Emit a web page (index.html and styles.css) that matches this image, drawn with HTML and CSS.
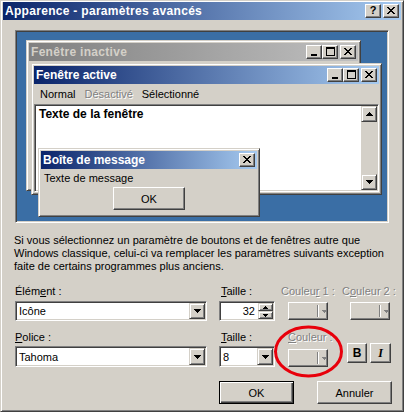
FILE: index.html
```html
<!DOCTYPE html>
<html lang="fr">
<head>
<meta charset="utf-8">
<title>Apparence - paramètres avancés</title>
<link rel="stylesheet" href="styles.css">
</head>
<body>
<div class="win">
  <div class="titlebar">
    <span class="ttext">Apparence - paramètres avancés</span>
    <div class="capbtns">
      <span class="capbtn qmark">?</span>
      <span class="capbtn gap"><svg width="8" height="7" viewBox="0 0 8 7" shape-rendering="crispEdges"><path d="M0 0h2v1H0zM6 0h2v1H6zM1 1h2v1H1zM5 1h2v1H5zM2 2h4v1H2zM3 3h2v1H3zM2 4h4v1H2zM1 5h2v1H1zM5 5h2v1H5zM0 6h2v1H0zM6 6h2v1H6z" fill="#000"/></svg></span>
    </div>
  </div>

  <div class="content">
    <div class="preview">
      <div class="pwin inactive">
        <div class="cap cap-inactive">
          <span class="captext">Fenêtre inactive</span>
          <div class="capbtns">
            <span class="capbtn"><svg width="6" height="2" viewBox="0 0 6 2" class="minglyph"><rect width="6" height="2" fill="#000"/></svg></span>
            <span class="capbtn"><svg width="9" height="9" viewBox="0 0 9 9" shape-rendering="crispEdges"><path d="M0 0h9v2H0zM0 2h1v7H0zM8 2h1v7H8zM1 8h7v1H1z" fill="#000"/></svg></span>
            <span class="capbtn gap"><svg width="8" height="7" viewBox="0 0 8 7" shape-rendering="crispEdges"><path d="M0 0h2v1H0zM6 0h2v1H6zM1 1h2v1H1zM5 1h2v1H5zM2 2h4v1H2zM3 3h2v1H3zM2 4h4v1H2zM1 5h2v1H1zM5 5h2v1H5zM0 6h2v1H0zM6 6h2v1H6z" fill="#000"/></svg></span>
          </div>
        </div>
      </div>

      <div class="pwin active">
        <div class="cap cap-active">
          <span class="captext">Fenêtre active</span>
          <div class="capbtns">
            <span class="capbtn"><svg width="6" height="2" viewBox="0 0 6 2" class="minglyph"><rect width="6" height="2" fill="#000"/></svg></span>
            <span class="capbtn"><svg width="9" height="9" viewBox="0 0 9 9" shape-rendering="crispEdges"><path d="M0 0h9v2H0zM0 2h1v7H0zM8 2h1v7H8zM1 8h7v1H1z" fill="#000"/></svg></span>
            <span class="capbtn gap"><svg width="8" height="7" viewBox="0 0 8 7" shape-rendering="crispEdges"><path d="M0 0h2v1H0zM6 0h2v1H6zM1 1h2v1H1zM5 1h2v1H5zM2 2h4v1H2zM3 3h2v1H3zM2 4h4v1H2zM1 5h2v1H1zM5 5h2v1H5zM0 6h2v1H0zM6 6h2v1H6z" fill="#000"/></svg></span>
          </div>
        </div>
        <div class="menubar">
          <span class="mitem">Normal</span>
          <span class="mitem disabled">Désactivé</span>
          <span class="mitem">Sélectionné</span>
        </div>
        <div class="textarea">
          <div class="tcontent">Texte de la fenêtre</div>
          <div class="scrollbar">
            <span class="sbtn"><svg width="7" height="4" viewBox="0 0 7 4" shape-rendering="crispEdges"><path d="M3 0h1v1H3zM2 1h3v1H2zM1 2h5v1H1zM0 3h7v1H0z" fill="#000"/></svg></span>
            <span class="strack"></span>
            <span class="sbtn"><svg width="7" height="4" viewBox="0 0 7 4" shape-rendering="crispEdges"><path d="M0 0h7v1H0zM1 1h5v1H1zM2 2h3v1H2zM3 3h1v1H3z" fill="#000"/></svg></span>
          </div>
        </div>
      </div>

      <div class="pwin msg">
        <div class="cap cap-active">
          <span class="captext">Boîte de message</span>
          <div class="capbtns">
            <span class="capbtn"><svg width="8" height="7" viewBox="0 0 8 7" shape-rendering="crispEdges"><path d="M0 0h2v1H0zM6 0h2v1H6zM1 1h2v1H1zM5 1h2v1H5zM2 2h4v1H2zM3 3h2v1H3zM2 4h4v1H2zM1 5h2v1H1zM5 5h2v1H5zM0 6h2v1H0zM6 6h2v1H6z" fill="#000"/></svg></span>
          </div>
        </div>
        <div class="msgtext">Texte de message</div>
        <div class="msgbtnrow"><span class="pbtn msgok">OK</span></div>
      </div>
    </div>

    <p class="desc">Si vous sélectionnez un paramètre de boutons et de fenêtres autre que<br>Windows classique, celui-ci va remplacer les paramètres suivants exception<br>faite de certains programmes plus anciens.</p>

    <div class="frow frow1">
      <div class="field f-elem">
        <span class="lbl">Élém<u>e</u>nt :</span>
        <div class="combo h20">
          <span class="cval">Icône</span>
          <span class="dropbtn"><svg width="7" height="4" viewBox="0 0 7 4" shape-rendering="crispEdges"><path d="M0 0h7v1H0zM1 1h5v1H1zM2 2h3v1H2zM3 3h1v1H3z" fill="#000"/></svg></span>
        </div>
      </div>
      <div class="field f-size">
        <span class="lbl lbl-ind"><u>T</u>aille :</span>
        <div class="spin">
          <span class="sval">32</span>
          <span class="spinbtns">
            <span class="spbtn"><svg width="5" height="3" viewBox="0 0 5 3" shape-rendering="crispEdges"><path d="M2 0h1v1H2zM1 1h3v1H1zM0 2h5v1H0z" fill="#000"/></svg></span>
            <span class="spbtn"><svg width="5" height="3" viewBox="0 0 5 3" shape-rendering="crispEdges"><path d="M0 0h5v1H0zM1 1h3v1H1zM2 2h1v1H2z" fill="#000"/></svg></span>
          </span>
        </div>
      </div>
      <div class="field f-col1">
        <span class="lbl disabled">Couleu<u>r</u> 1 :</span>
        <span class="colbtn ind7">
          <span class="colsep"></span>
          <svg class="colarrow" width="5" height="3" viewBox="0 0 5 3" shape-rendering="crispEdges"><path d="M0 0h5v1H0zM1 1h3v1H1zM2 2h1v1H2z" fill="#808080"/></svg>
        </span>
      </div>
      <div class="field f-col2">
        <span class="lbl disabled">C<u>o</u>uleur 2 :</span>
        <span class="colbtn ind8">
          <span class="colsep"></span>
          <svg class="colarrow" width="5" height="3" viewBox="0 0 5 3" shape-rendering="crispEdges"><path d="M0 0h5v1H0zM1 1h3v1H1zM2 2h1v1H2z" fill="#808080"/></svg>
        </span>
      </div>
    </div>

    <div class="frow frow2">
      <div class="field f-elem">
        <span class="lbl"><u>P</u>olice :</span>
        <div class="combo h21">
          <span class="cval">Tahoma</span>
          <span class="dropbtn"><svg width="7" height="4" viewBox="0 0 7 4" shape-rendering="crispEdges"><path d="M0 0h7v1H0zM1 1h5v1H1zM2 2h3v1H2zM3 3h1v1H3z" fill="#000"/></svg></span>
        </div>
      </div>
      <div class="field f-size">
        <span class="lbl lbl-ind"><u>T</u>aille :</span>
        <div class="combo h21">
          <span class="cval">8</span>
          <span class="dropbtn"><svg width="7" height="4" viewBox="0 0 7 4" shape-rendering="crispEdges"><path d="M0 0h7v1H0zM1 1h5v1H1zM2 2h3v1H2zM3 3h1v1H3z" fill="#000"/></svg></span>
        </div>
      </div>
      <div class="field f-col">
        <span class="lbl disabled"><u>C</u>ouleur :</span>
        <span class="colbtn low">
          <span class="colsep"></span>
          <svg class="colarrow" width="5" height="3" viewBox="0 0 5 3" shape-rendering="crispEdges"><path d="M0 0h5v1H0zM1 1h3v1H1zM2 2h1v1H2z" fill="#808080"/></svg>
        </span>
      </div>
      <span class="pbtn sq bold">B</span>
      <span class="pbtn sq ital">I</span>
    </div>

    <div class="actions">
      <span class="pbtn dlgbtn default">OK</span>
      <span class="pbtn dlgbtn">Annuler</span>
    </div>
  </div>

  <svg class="annot" width="72" height="54" viewBox="0 0 72 54"><ellipse cx="35.5" cy="26.5" rx="33" ry="24.5" fill="none" stroke="#E8000B" stroke-width="3"/></svg>
</div>
</body>
</html>
```

FILE: styles.css
```css
* { box-sizing: border-box; }
html, body { margin: 0; padding: 0; }
body {
  width: 404px;
  height: 412px;
  overflow: hidden;
  background: #D4D0C8;
  font-family: "Liberation Sans", Arial, sans-serif;
  font-size: 11px;
  color: #000;
}
.win {
  position: relative;
  width: 404px;
  height: 412px;
  background: #D4D0C8;
  border: 1px solid;
  border-color: #D4D0C8 #404040 #404040 #D4D0C8;
  box-shadow: inset 1px 1px #fff, inset -1px -1px #808080;
  padding: 1px 2px 2px 2px;
}
.titlebar {
  height: 18px;
  display: flex;
  align-items: center;
  justify-content: space-between;
  padding: 0 2px 0 2px;
  background: linear-gradient(to right, #0A246A, #A6CAF0);
}
.ttext {
  color: #fff;
  font-weight: bold;
  font-size: 12px;
  letter-spacing: 0.3px;
  white-space: nowrap;
}
.capbtns { display: flex; align-items: center; }
.capbtn {
  width: 16px;
  height: 14px;
  display: flex;
  align-items: center;
  justify-content: center;
  background: #D4D0C8;
  border: 1px solid;
  border-color: #fff #404040 #404040 #fff;
  box-shadow: inset -1px -1px #808080;
  padding-bottom: 1px;
}
.capbtn.gap { margin-left: 2px; }
.capbtn .minglyph { margin-top: 6px; margin-left: -1px; }
.qmark {
  font-weight: bold;
  font-size: 11px;
  line-height: 11px;
}

.content { display: flex; flex-direction: column; }

.preview {
  position: relative;
  margin: 10px 0 0 12px;
  width: 374px;
  height: 193px;
  background: #3A6EA5;
  border: 1px solid;
  border-color: #808080 #fff #fff #808080;
  box-shadow: inset 1px 1px #404040, inset -1px -1px #D4D0C8;
}
.pwin {
  position: absolute;
  display: flex;
  flex-direction: column;
  background: #D4D0C8;
  border: 1px solid;
  border-color: #D4D0C8 #404040 #404040 #D4D0C8;
  box-shadow: inset 1px 1px #fff, inset -1px -1px #808080;
  padding: 2px;
}
.inactive { left: 10px; top: 9px; width: 335px; height: 151px; }
.active { left: 15px; top: 32px; width: 351px; height: 132px; }
.msg { left: 22px; top: 117px; width: 222px; height: 69px; }

.cap {
  height: 18px;
  flex: none;
  display: flex;
  align-items: center;
  justify-content: space-between;
  padding: 0 2px;
}
.cap-active { background: linear-gradient(to right, #0A246A, #A6CAF0); }
.cap-inactive { background: linear-gradient(to right, #808080, #C0C0C0); }
.captext {
  font-weight: bold;
  font-size: 12px;
  color: #fff;
  white-space: nowrap;
}
.cap-inactive .captext { color: #D4D0C8; letter-spacing: 0.3px; }

.menubar {
  height: 20px;
  flex: none;
  display: flex;
  align-items: center;
  gap: 9px;
  padding-left: 6px;
}
.disabled { color: #808080; text-shadow: 1px 1px 0 #fff; }

.textarea {
  flex: 1;
  display: flex;
  background: #fff;
  border: 1px solid;
  border-color: #808080 #fff #fff #808080;
  box-shadow: inset 1px 1px #404040, inset -1px -1px #D4D0C8;
  padding: 1px;
}
.tcontent {
  flex: 1;
  padding: 2px 3px;
  font-weight: bold;
  line-height: 13px;
  font-size: 12px;
}
.scrollbar {
  width: 16px;
  display: flex;
  flex-direction: column;
  background: #D4D0C8;
}
.sbtn {
  width: 16px;
  height: 16px;
  flex: none;
  display: flex;
  align-items: center;
  justify-content: center;
  background: #D4D0C8;
  border: 1px solid;
  border-color: #D4D0C8 #404040 #404040 #D4D0C8;
  box-shadow: inset 1px 1px #fff, inset -1px -1px #808080;
}
.strack { flex: 1; }

.msgtext {
  padding: 3px 0 0 3px;
  line-height: 13px;
  height: 18px;
}
.msgbtnrow { display: flex; justify-content: center; }

.pbtn {
  display: flex;
  align-items: center;
  justify-content: center;
  background: #D4D0C8;
  border: 1px solid;
  border-color: #fff #404040 #404040 #fff;
  box-shadow: inset -1px -1px #808080;
}
.msgok { width: 72px; height: 23px; }

.desc {
  margin: 11px 0 0 11px;
  line-height: 13px;
  white-space: nowrap;
}

.frow { display: flex; margin-left: 12px; }
.frow1 { margin-top: 12px; }
.frow2 { margin-top: 10px; }
.field { display: flex; flex-direction: column; }
.lbl { line-height: 13px; height: 13px; white-space: nowrap; }
.lbl-ind { padding-left: 2px; }
.frow1 .lbl + * { margin-top: 3px; }
.frow2 .lbl + * { margin-top: 2px; }

.f-elem { width: 192px; }
.f-size { width: 56px; margin-left: 12px; }
.f-col1 { width: 61px; margin-left: 6px; }
.f-col2 { width: 48px; }
.f-col { width: 40px; margin-left: 13px; }

.combo {
  display: flex;
  background: #fff;
  border: 1px solid;
  border-color: #808080 #fff #fff #808080;
  box-shadow: inset 1px 1px #404040, inset -1px -1px #D4D0C8;
  padding: 1px;
}
.h20 { height: 20px; }
.h21 { height: 21px; }
.cval { flex: 1; padding-left: 2px; display: flex; align-items: center; }
.dropbtn {
  width: 16px;
  flex: none;
  display: flex;
  align-items: center;
  justify-content: center;
  background: #D4D0C8;
  border: 1px solid;
  border-color: #D4D0C8 #404040 #404040 #D4D0C8;
  box-shadow: inset 1px 1px #fff, inset -1px -1px #808080;
}

.spin {
  height: 20px;
  display: flex;
  background: #fff;
  border: 1px solid;
  border-color: #808080 #fff #fff #808080;
  box-shadow: inset 1px 1px #404040, inset -1px -1px #D4D0C8;
  padding: 1px;
}
.sval { flex: 1; text-align: right; padding-right: 3px; display: flex; align-items: center; justify-content: flex-end; }
.spinbtns { width: 15px; display: flex; flex-direction: column; }
.spbtn {
  flex: 1;
  display: flex;
  align-items: center;
  justify-content: center;
  background: #D4D0C8;
  border: 1px solid;
  border-color: #D4D0C8 #404040 #404040 #D4D0C8;
  box-shadow: inset 1px 1px #fff, inset -1px -1px #808080;
}

.colbtn {
  width: 40px;
  height: 18px;
  display: flex;
  align-items: center;
  background: #D4D0C8;
  border: 1px solid;
  border-color: #fff #404040 #404040 #fff;
  box-shadow: inset -1px -1px #808080;
  padding-left: 28px;
}
.frow1 .colbtn { margin-top: 4px; }
.ind7 { margin-left: 7px; }
.ind8 { margin-left: 8px; }
.frow2 .lbl + .colbtn.low { margin-top: 5px; }
.colsep {
  width: 2px;
  height: 12px;
  border-left: 1px solid #808080;
  border-right: 1px solid #fff;
}
.colarrow { margin-left: 3px; }

.sq { width: 20px; height: 20px; margin-top: 12px; font-size: 12px; }
.bold { margin-left: 19px; font-weight: bold; }
.ital {
  margin-left: 3px;
  width: 21px;
  font-style: italic;
  font-weight: bold;
  font-family: "Liberation Serif", serif;
}

.actions {
  display: flex;
  justify-content: flex-end;
  gap: 23px;
  margin-top: 14px;
  padding-right: 9px;
}
.dlgbtn { width: 75px; height: 23px; }
.default {
  border-color: #000;
  box-shadow: inset 1px 1px #fff, inset -1px -1px #404040, inset -2px -2px #808080;
}

.annot {
  position: absolute;
  left: 272px;
  top: 324px;
}
```
